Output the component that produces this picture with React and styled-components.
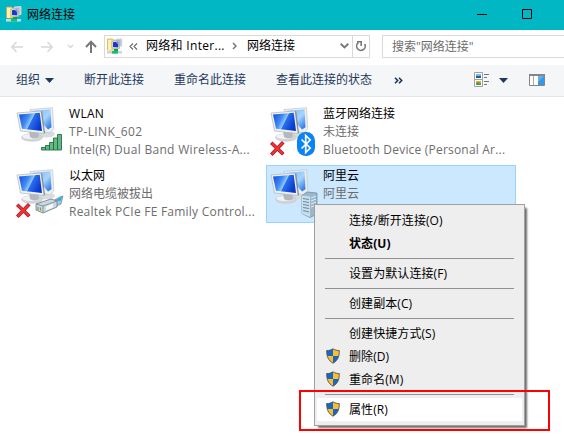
import React from "react";
import styled, { createGlobalStyle, css } from "styled-components";

const Global = createGlobalStyle`
  * { box-sizing: border-box; }
  body { margin: 0; background: #fff; overflow: hidden; }
  svg { display: block; flex: none; }
`;

const Window = styled.div`
  position: relative;
  width: 564px;
  height: 437px;
  overflow: hidden;
  background: #fff;
  color: #000;
  font: 12px/18px "Open Sans", "Noto Sans CJK SC", sans-serif;
  white-space: nowrap;
`;

const TitleBar = styled.header`
  height: 30px;
  display: flex;
  align-items: center;
  background: #00b7c3;
  padding: 0 32px 2px 6px;
`;

const Title = styled.span`
  flex: 1;
  margin-left: 5px;
  padding-top: 1px;
`;

const WindowButtons = styled.div`
  display: flex;
  gap: 35px;
`;

const AddressRow = styled.div`
  height: 35px;
  display: flex;
  align-items: center;
  padding: 0 0 3px 11px;
`;

const NavArrows = styled.div`
  width: 93px;
  flex: none;
  padding-top: 2px;
`;

const AddressBox = styled.div`
  width: 266px;
  height: 23px;
  flex: none;
  display: flex;
  align-items: center;
  border: 1px solid #d9d9d9;
  padding-left: 2px;
`;

const Crumb = styled.span`
  width: ${(p) => p.$width}px;
  letter-spacing: ${(p) => p.$tracking || 0}px;
`;

const Spacer = styled.span`
  flex: ${(p) => (p.$width ? "none" : 1)};
  width: ${(p) => p.$width || 0}px;
`;

const RefreshCell = styled.div`
  width: 17px;
  height: 21px;
  display: grid;
  place-items: center;
  border-left: 1px solid #d9d9d9;
`;

const SearchBox = styled.div`
  flex: 1;
  height: 23px;
  margin-left: 12px;
  padding-left: 9px;
  border: 1px solid #d9d9d9;
  border-right: 0;
  color: #6d6d6d;
  line-height: 21px;
`;

const Toolbar = styled.nav`
  height: 32px;
  display: flex;
  align-items: center;
  padding: 0 19px 1px 16px;
  background: #f5f6f7;
  border-bottom: 1px solid #e5e5e5;
  color: #1e395b;
`;

const Command = styled.span`
  display: flex;
  align-items: center;
  gap: 5px;
  margin-right: ${(p) => (p.$last ? 22 : 30)}px;
`;

const Connections = styled.main`
  display: grid;
  grid-template-columns: 250px 250px;
  grid-auto-rows: 58px;
  gap: 4px;
  padding: 6px 0 0 12px;
`;

const Tile = styled.article`
  display: flex;
  padding: 1px 0 0 3px;
  border: 1px solid transparent;
  ${(p) =>
    p.$selected &&
    css`
      background: #cce8ff;
      border-color: #99d1ff;
    `}
`;

const TileIcon = styled.div`
  width: 53px;
  padding-top: 2px;
`;

const Line = styled.div`
  height: 18px;
  color: ${(p) => (p.$name ? "#000" : "#6d6d6d")};
  letter-spacing: ${(p) => p.$tracking || 0}px;
`;

const Menu = styled.ul`
  position: absolute;
  left: 314px;
  top: 204px;
  width: 211px;
  margin: 0;
  padding: 4px 2px;
  list-style: none;
  background: #eee;
  border: 1px solid #a0a0a0;
  box-shadow: 3px 3px 2px -1px rgba(0, 0, 0, 0.58);
`;

const MenuItem = styled.li`
  height: 23px;
  display: flex;
  align-items: center;
  background: ${(p) => (p.$active ? "#fff" : "transparent")};
  font-weight: ${(p) => (p.$bold ? 700 : 400)};
  letter-spacing: 0.08px;
`;

const MenuGlyph = styled.span`
  width: 32px;
  padding: 0 0 1px 8px;
`;

const Separator = styled.li`
  height: 1px;
  margin: 3px 8px;
  background: #919191;
`;

const Highlight = styled.div`
  position: absolute;
  left: 299px;
  top: 390px;
  width: 251px;
  height: 41px;
  border: 2px solid #f00;
`;

const NetworkIcon = ({ base }) => (
  <svg width="16" height="16" viewBox="0 0 16 16">
    <path d="M0.5 1h5l1 1H10v10H0.5z" fill="#f5df87" stroke="#c6a94b" strokeWidth=".7" />
    <path d="M1 2h3v10H1z" fill="#fff0ad" />
    <path d="M8.5 1l6.500-.4v7.800l-6.500 1z" fill="#b9c6dc" stroke="#e8e8e8" strokeWidth=".8" />
    <path d="M5 3.200l7.300-.7.3 8.200L5 10z" fill="#f2efe0" stroke="#9d9b84" strokeWidth=".6" />
    <path d="M6 4.200l5.300-.6v5.800L6 8.900z" fill="#1439cc" />
    <path d="M8.600 4l2.700-.3v3z" fill="#6d91f2" />
    <path d="M7 11h4v2H7z" fill="#149f62" />
    <path d="M0 13h15v2.600H0z" fill={base} />
    <path d="M5 13h6v2.600H5z" fill="#13bf78" />
  </svg>
);

const Caret = () => (
  <svg width="9" height="5" viewBox="0 0 9 5">
    <path d="M0 0h9L4.500 5z" fill="#1e395b" />
  </svg>
);

const Chevrons = ({ left, color }) => (
  <svg width="9" height="7" viewBox="0 0 9 7">
    <path
      d={left ? "M4 .5l-3 3 3 3M8 .5l-3 3 3 3" : "M1 .8l2.700 2.700L1 6.200M5 .8l2.700 2.700L5 6.200"}
      fill="none"
      stroke={color}
      strokeWidth={left ? 1.1 : 1.6}
    />
  </svg>
);

const Arrows = () => (
  <svg width="93" height="14" viewBox="0 0 93 14" fill="none">
    <g stroke="#d8d8d8" strokeWidth="1.500">
      <path d="M12 7H1M5.500 2L.8 7l4.700 5" />
      <path d="M30 7h11M36.500 2l4.700 5-4.700 5" />
      <path d="M57 5l2.500 2.500L62 5" />
    </g>
    <path d="M80 13V2M75 7l5-5.200L85 7" stroke="#777" strokeWidth="2" />
  </svg>
);

const Shield = () => (
  <svg width="16" height="16" viewBox="0 0 16 16">
    <path d="M8 .8c2 1.300 4.100 1.800 6.300 1.800C14.300 8.800 12.800 12.300 8 15.200 3.200 12.300 1.700 8.800 1.700 2.600 3.900 2.600 6 2.100 8 .8z" fill="#fdbd2c" />
    <path d="M8 .8V8H2.300C1.800 6.300 1.700 4.500 1.700 2.600 3.900 2.600 6 2.100 8 .8zM8 8h5.700c-.8 3.300-2.600 5.600-5.700 7.200z" fill="#1768c5" />
    <path d="M8 .8c2 1.300 4.100 1.800 6.300 1.800C14.300 8.800 12.800 12.300 8 15.200 3.200 12.300 1.700 8.800 1.700 2.600 3.900 2.600 6 2.100 8 .8z" fill="none" stroke="#45515c" strokeWidth=".9" />
  </svg>
);

const RedCross = () => (
  <g transform="translate(0 34)" strokeLinecap="square" fill="none">
    <path d="M2.500 3l9.500 9M12 2.500l-9.500 10" stroke="#b9141b" strokeWidth="3.600" />
    <path d="M2.500 3l9.500 9M12 2.500l-9.500 10" stroke="#ee3438" strokeWidth="2" />
  </g>
);

const badges = {
  wifi: (
    <g fill="#63b884" stroke="#237044" strokeWidth=".9">
      <path d="M25.500 45.500h4v2.500h-4zM29.500 43.500h4v4.500h-4zM33.500 40.500h4v7.500h-4zM37.500 36h4v12h-4zM41.500 32.500h4v15.500h-4z" transform="translate(0 -5)" />
    </g>
  ),
  bluetooth: (
    <g>
      <rect x="27" y="25" width="18" height="24" rx="8.500" fill="#0a84f4" />
      <path d="M31.500 32.500l8.700 8.500-4.500 4.500v-17l4.500 4.500-8.700 8.500" fill="none" stroke="#fff" strokeWidth="1.700" />
      <RedCross />
    </g>
  ),
  cable: (
    <g>
      <path d="M33 34l11-6 3-1-2 8-9 4z" fill="#9fcbe0" stroke="#66869a" strokeWidth=".7" />
      <path d="M39 31.500l7.500-4.500-2 5z" fill="#38a9d6" />
      <path d="M20 35l15-5 6 2v6l-14 6-7-3z" fill="#cbd8de" stroke="#6d7d87" strokeWidth=".8" />
      <path d="M20 35l7 2 14-5M27 37v7" fill="none" stroke="#708895" strokeWidth=".8" />
      <path d="M22 38v3M24.500 38.500v3" stroke="#8c9a44" strokeWidth="1.200" />
      <path d="M30 37.500l7-3v4l-7 3z" fill="#f3f8fa" />
      <RedCross />
    </g>
  ),
  server: (
    <g>
      <path d="M32 26.500l5-3.500 10 1v21l-7 3.500-8-4z" fill="#9ab8ca" stroke="#668aa3" strokeWidth=".7" />
      <path d="M32 26.500l8 1v20.500l-8-3.500z" fill="#cbdde8" />
      <path d="M33 29.500l6 1M33 32.500l6 1M33 35.500l6 1M33 38.500l6 1M33 41.500l6 1.500" stroke="#628ba7" />
      <path d="M41 29l5-2M41 32l5-2M41 35l5-2M41 38l5-2" stroke="#e2edf3" />
    </g>
  ),
};

const ConnectionIcon = ({ kind }) => (
  <svg width="50" height="51" viewBox="0 0 50 51">
    <defs>
      <linearGradient id={`screen-${kind}`} x1="0" y1=".2" x2="1" y2=".6">
        <stop offset="0" stopColor="#1454e4" />
        <stop offset=".35" stopColor="#428bf2" />
        <stop offset=".53" stopColor="#8fc8ff" />
        <stop offset=".56" stopColor="#2b6fee" />
        <stop offset="1" stopColor="#0736cb" />
      </linearGradient>
      <linearGradient id={`back-${kind}`} x1="0" y1="0" x2="1" y2="1">
        <stop offset="0" stopColor="#78b7fa" />
        <stop offset=".55" stopColor="#a5d4ff" />
        <stop offset="1" stopColor="#1768e3" />
      </linearGradient>
    </defs>
    <ellipse cx="30" cy="27" rx="9" ry="3.500" fill="#d9dcde" />
    <path d="M14 2.500L36.500.700l1.300 21L34 26l-14-3z" fill="#eceeef" stroke="#b8bec1" strokeWidth=".6" />
    <path d="M16 4L34.500 2.200l1 18L32 22.500z" fill={`url(#back-${kind})`} />
    <ellipse cx="16" cy="30.500" rx="10.500" ry="3.800" fill="#d3d6d8" stroke="#bbbfc1" strokeWidth=".5" />
    <ellipse cx="14.500" cy="29.500" rx="8" ry="2.500" fill="#f0f2f3" />
    <path d="M13 23h9l1 7c-3 1.800-7 1.500-9 0z" fill="#b4b8bb" />
    <path d="M1 6L25 4l3 22.500-23.500-2.500z" fill="#eff1f2" stroke="#acb3b7" strokeWidth=".7" />
    <path d="M25 4l1.300.4L29 26l-1 .5z" fill="#858e94" />
    <path d="M3 7.500l20.700-1.800 2.300 18.300-20-2.200z" fill={`url(#screen-${kind})`} />
    {badges[kind]}
  </svg>
);

const connections = [
  { kind: "wifi", lines: [["WLAN", 0.3], ["TP-LINK_602", 0.35], ["Intel(R) Dual Band Wireless-A...", 0.3]] },
  { kind: "bluetooth", lines: [["蓝牙网络连接"], ["未连接"], ["Bluetooth Device (Personal Ar...", 0.2]] },
  { kind: "cable", lines: [["以太网"], ["网络电缆被拔出"], ["Realtek PCIe FE Family Control...", 0.23]] },
  { kind: "server", selected: true, lines: [["阿里云"], ["阿里云"]] },
];

const menu = [
  { label: "连接/断开连接(O)" },
  { label: "状态(U)", bold: true },
  null,
  { label: "设置为默认连接(F)" },
  null,
  { label: "创建副本(C)" },
  null,
  { label: "创建快捷方式(S)" },
  { label: "删除(D)", shield: true },
  { label: "重命名(M)", shield: true },
  null,
  { label: "属性(R)", shield: true, active: true },
];

export default function App() {
  return (
    <Window>
      <Global />
      <TitleBar>
        <NetworkIcon base="#b7dfe1" />
        <Title>网络连接</Title>
        <WindowButtons>
          <svg width="10" height="10"><path d="M0 5.500h10" stroke="#000" /></svg>
          <svg width="10" height="10"><path d="M.5.5h9v9h-9z" fill="none" stroke="#000" /></svg>
        </WindowButtons>
      </TitleBar>

      <AddressRow>
        <NavArrows><Arrows /></NavArrows>
        <AddressBox>
          <NetworkIcon base="#d2d3d8" />
          <Spacer $width={6} />
          <Chevrons left color="#666" />
          <Spacer $width={8} />
          <Crumb $width={86} $tracking={0.3}>网络和 Inter...</Crumb>
          <svg width="5" height="8"><path d="M1 1l3 3-3 3" fill="none" stroke="#777" strokeWidth="1.500" /></svg>
          <Spacer $width={10} />
          <Crumb $width={50}>网络连接</Crumb>
          <Spacer />
          <svg width="9" height="6"><path d="M.7 .8l3.800 3.700L8.300.8" fill="none" stroke="#777" strokeWidth="1.900" /></svg>
          <Spacer $width={3} />
          <RefreshCell>
            <svg width="12" height="12" viewBox="0 0 12 12" fill="none" stroke="#777" strokeWidth="1.600">
              <path d="M3.500 2.500A4.300 4.300 0 1 0 9.700 4" />
              <path d="M2 1.800h4.200V6" />
            </svg>
          </RefreshCell>
        </AddressBox>
        <SearchBox>搜索"网络连接"</SearchBox>
      </AddressRow>

      <Toolbar>
        <Command>组织 <Caret /></Command>
        <Command>断开此连接</Command>
        <Command>重命名此连接</Command>
        <Command $last>查看此连接的状态</Command>
        <Chevrons color="#1e395b" />
        <Spacer />
        <svg width="16" height="16" viewBox="0 0 16 16">
          <path d="M.5.5h8v7h-8zM.5 7.500h8v7h-8z" fill="#fff" stroke="#a0a0a0" />
          <path d="M2 2h5v2H2z" fill="#75b8ed" /><path d="M2 4h5v2H2z" fill="#245c8c" />
          <path d="M2 9h5v4H2z" fill="#f0aa36" /><path d="M2 11l2-1 3 1v2H2z" fill="#579a42" />
          <path d="M10 2.500h5M10 5.500h3M10 9.500h5M10 12.500h3" stroke="#777" />
        </svg>
        <Spacer $width={9} />
        <Caret />
        <Spacer $width={21} />
        <svg width="16" height="12" viewBox="0 0 16 12">
          <path d="M.5.5h15v11H.5z" fill="#fff" stroke="#858585" />
          <path d="M0 0h16v2H0z" fill="#858585" />
          <path d="M4.500 2v9" stroke="#aaa" />
          <path d="M9 2h6v9H9z" fill="#3998e3" /><path d="M9 2h6L9 8z" fill="#5eb2ef" />
        </svg>
      </Toolbar>

      <Connections>
        {connections.map((c) => (
          <Tile key={c.kind} $selected={c.selected}>
            <TileIcon><ConnectionIcon kind={c.kind} /></TileIcon>
            <div>
              {c.lines.map(([text, tracking], i) => (
                <Line key={i} $name={i === 0} $tracking={tracking}>{text}</Line>
              ))}
            </div>
          </Tile>
        ))}
      </Connections>

      <Menu>
        {menu.map((m, i) =>
          m ? (
            <MenuItem key={i} $bold={m.bold} $active={m.active}>
              <MenuGlyph>{m.shield && <Shield />}</MenuGlyph>
              {m.label}
            </MenuItem>
          ) : (
            <Separator key={i} />
          )
        )}
      </Menu>
      <Highlight />
    </Window>
  );
}
